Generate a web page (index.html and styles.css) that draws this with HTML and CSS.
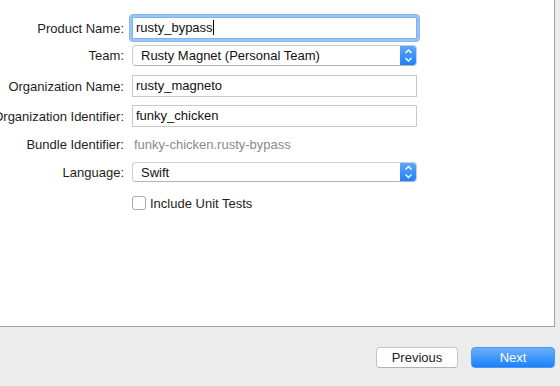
FILE: index.html
```html
<!DOCTYPE html>
<html lang="en">

<head>
  <meta charset="UTF-8">
  <title>New Project Options</title>
  <link rel="stylesheet" href="styles.css">
</head>

<body>

  <div class="panel">
    <div class="form">
      <div class="row row-product">
        <label class="label" for="product-name"><span>Product Name:</span></label>
        <div class="focus-ring">
          <div class="field field-focus" id="product-name">rusty_bypass<span class="caret"></span></div>
        </div>
      </div>

      <div class="row row-team">
        <span class="label"><span>Team:</span></span>
        <div class="popup">
          <span class="popup-text">Rusty Magnet (Personal Team)</span>
          <span class="stepper">
            <svg width="17" height="21" viewBox="0 0 17 21">
              <path d="M5.5 8 L8.5 5 L11.5 8" fill="none" stroke="#fff" stroke-width="1.4" />
              <path d="M5.5 13 L8.5 16 L11.5 13" fill="none" stroke="#fff" stroke-width="1.4" />
            </svg>
          </span>
        </div>
      </div>

      <div class="row row-org">
        <span class="label"><span>Organization Name:</span></span>
        <div class="field">rusty_magneto</div>
      </div>

      <div class="row row-ident">
        <span class="label"><span>Organization Identifier:</span></span>
        <div class="field">funky_chicken</div>
      </div>

      <div class="row row-bundle">
        <span class="label"><span>Bundle Identifier:</span></span>
        <span class="static">funky-chicken.rusty-bypass</span>
      </div>

      <div class="row row-lang">
        <span class="label"><span>Language:</span></span>
        <div class="popup popup-short">
          <span class="popup-text">Swift</span>
          <span class="stepper">
            <svg width="17" height="20" viewBox="0 0 17 20">
              <path d="M5.5 7.5 L8.5 4.5 L11.5 7.5" fill="none" stroke="#fff" stroke-width="1.4" />
              <path d="M5.5 12.5 L8.5 15.5 L11.5 12.5" fill="none" stroke="#fff" stroke-width="1.4" />
            </svg>
          </span>
        </div>
      </div>

      <div class="row row-check">
        <span class="label"></span>
        <label class="check">
          <span class="box"></span>
          Include Unit Tests
        </label>
      </div>
    </div>
  </div>

  <div class="footer">
    <button class="btn">Previous</button>
    <button class="btn btn-primary">Next</button>
  </div>

</body>

</html>
```

FILE: styles.css
```css
body {
  margin: 0;
  font-family: "Liberation Sans", Arial, sans-serif;
  font-size: 13px;
  color: #1e1e1e;
  background-color: #ececec;
  width: 560px;
  height: 386px;
  overflow: hidden;
}

.panel {
  width: 554px;
  height: 326px;
  background: white;
  border-right: 1px solid #a2a2a2;
  border-bottom: 1px solid #a2a2a2;
}

.form {
  padding-top: 17px;
}

.row {
  display: flex;
  align-items: center;
  height: 22px;
}

.label {
  display: flex;
  justify-content: flex-end;
  width: 124px;
  flex: none;
  margin-right: 8px;
  white-space: nowrap;
  overflow: hidden;
}

.label span {
  flex: none;
}

.row-team {
  margin-top: 6px;
  height: 21px;
}

.row-org {
  margin-top: 9px;
}

.row-ident {
  margin-top: 8px;
}

.row-bundle {
  margin-top: 6px;
}

.row-lang {
  margin-top: 7px;
  height: 20px;
}

.row-check {
  margin-top: 13px;
  height: 16px;
}

.field {
  width: 285px;
  height: 22px;
  box-sizing: border-box;
  border: 1px solid #c9c9c9;
  padding: 0 3px;
  line-height: 20px;
  color: #111;
  background: white;
}

.focus-ring {
  margin-left: -3px;
  padding: 2px;
  border: 1px solid #86b9f0;
  border-radius: 4px;
  background: #9ac6f5;
}

.field-focus {
  border-color: #7fb1e8;
}

.caret {
  display: inline-block;
  width: 1px;
  height: 15px;
  background: #000;
  vertical-align: -3px;
}

.popup {
  display: flex;
  width: 285px;
  height: 21px;
  box-sizing: border-box;
  border: 1px solid #cdcdcd;
  border-bottom-color: #b4b4b4;
  border-radius: 4px;
  background: white;
  overflow: hidden;
}

.popup-short {
  height: 20px;
}

.popup-text {
  flex: 1;
  padding-left: 8px;
  line-height: 19px;
  color: #111;
}

.stepper {
  display: flex;
  width: 17px;
  margin: -1px -1px -1px 0;
  background: linear-gradient(#5fa9fb, #1b7ffa);
}

.static {
  padding-left: 2px;
  color: #8a8a8a;
}

.check {
  display: flex;
  align-items: center;
  color: #1e1e1e;
}

.box {
  width: 12px;
  height: 12px;
  margin-right: 4px;
  border: 1px solid #a9a9a9;
  border-radius: 3px;
  background: white;
}

.footer {
  display: flex;
  justify-content: flex-end;
  gap: 13px;
  padding-top: 20px;
  padding-right: 5px;
}

.btn {
  width: 82px;
  height: 21px;
  padding: 0;
  font-family: inherit;
  font-size: 13px;
  color: #1e1e1e;
  background: white;
  border: 1px solid #c6c6c6;
  border-bottom-color: #b2b2b2;
  border-radius: 4px;
}

.btn-primary {
  width: 84px;
  color: white;
  border-color: #4a97f5;
  background: linear-gradient(#69b1fa, #1a81fb);
}
```
